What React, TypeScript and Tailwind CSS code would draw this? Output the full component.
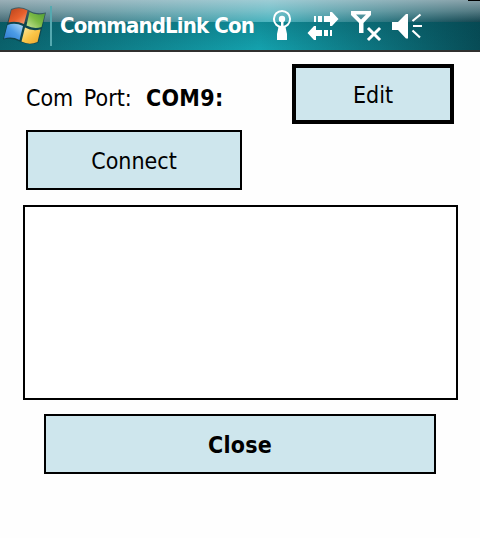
import React from "react";

function WindowsFlag() {
  return (
    <svg className="absolute left-0 top-0" width="50" height="50" viewBox="0 0 50 50">
      <defs>
        <linearGradient id="red" x1="0" y1="0" x2="1" y2="1"><stop offset="0" stopColor="#b8431c" /><stop offset=".55" stopColor="#e8602c" /><stop offset="1" stopColor="#f7a880" /></linearGradient>
        <linearGradient id="green" x1="1" y1="0" x2="0" y2="1"><stop offset="0" stopColor="#4c9a34" /><stop offset=".5" stopColor="#7dbb45" /><stop offset="1" stopColor="#c8e49a" /></linearGradient>
        <linearGradient id="blue" x1="0" y1="1" x2="1" y2="0"><stop offset="0" stopColor="#2f7bd0" /><stop offset=".5" stopColor="#4b9be6" /><stop offset="1" stopColor="#b5dcf6" /></linearGradient>
        <linearGradient id="gold" x1="1" y1="1" x2="0" y2="0"><stop offset="0" stopColor="#eda52c" /><stop offset=".5" stopColor="#fbc648" /><stop offset="1" stopColor="#fdeaa0" /></linearGradient>
      </defs>
      <path d="M11 9Q20 5 28.500 10Q36 15 46 12.500L38.500 42.500Q30 46 20.500 42Q12 37 3 39.500Z" fill="#12343b" fillOpacity=".6" />
      <path d="M11.500 10Q19 6.500 27.500 10.500L24 24Q16 20.500 8.500 22.500Z" fill="url(#red)" />
      <path d="M29.500 12Q36 16 45 13.500L41.500 27Q34 29.500 26.500 25.500Z" fill="url(#green)" />
      <path d="M7.500 25Q15 22 23 26L19.500 40Q12 36 4 38.500Z" fill="url(#blue)" />
      <path d="M25 27.500Q32 31.500 40.500 29.500L37.500 42Q29 45.500 21.500 41.500Z" fill="url(#gold)" />
    </svg>
  );
}

function StatusIcons() {
  return (
    <svg className="absolute left-[260px] top-0" width="180" height="50" viewBox="260 0 180 50" fill="white">
      <circle cx="282" cy="19" r="8.1" fill="none" stroke="white" strokeWidth="2" />
      <circle cx="282" cy="19" r="3.2" />
      <path d="M281 20H283.500V27H285.500L287 34V40H277V34L278.500 27H281Z" />
      <path d="M314 16h2v6h-2zM318 16h4v6h-4zM324 16h6v-4h2l6.500 7-6.500 7h-2v-4h-6z" />
      <path d="M332 30h-2v6h2zM328 30h-4v6h4zM322 30h-6v-4h-2l-6.500 7 6.500 7h2v-4h6z" />
      <path fillRule="evenodd" d="M351 11H371V15L363.500 23V33H359V23L351 15ZM356 14.500L361 19.500L366 14.500Z" />
      <path d="M369 29L379 39M379 29L369 39" stroke="white" strokeWidth="3" strokeLinecap="square" />
      <path d="M392 22H398L406 14H408V38.500H406L398 30H392Z" />
      <path d="M412.500 21L420.500 14.500M413 26H422M412.500 30.500L420 37.500" fill="none" stroke="white" strokeWidth="2.2" />
    </svg>
  );
}

export default function App() {
  return (
    <main className="h-[538px] w-[480px] overflow-hidden bg-[#fefefe] font-['DejaVu_Sans_Condensed','DejaVu_Sans',sans-serif] text-[23px] text-black">
      <header className="relative flex h-[52px] flex-col border-b-2 border-[#30302f]">
        <div className="relative h-[22px] bg-linear-to-r from-[#446a74] via-[#4ab4bf] via-56% to-[#164650]">
          <div className="h-full bg-linear-to-b from-[#d4dde4]/60 via-[#c9dce2]/35 to-transparent" />
          <div className="absolute right-0 top-0 h-px w-3 bg-black" />
        </div>
        <div className="h-7 bg-linear-to-r from-[#0a626c] via-[#14a2ae] via-54% to-[#074c56]">
          <div className="h-full bg-linear-to-b from-[#04404a]/25 to-transparent" />
        </div>
        <WindowsFlag />
        <div className="absolute left-[50px] top-[6px] h-10 w-[2px] bg-[#55a9b0]" />
        <div className="absolute left-[60px] top-[11px] whitespace-nowrap text-[22px] font-bold leading-[30px] tracking-[-0.85px] text-white">CommandLink Con</div>
        <StatusIcons />
      </header>
      <section className="flex h-[78px] items-start pl-[26px] pr-[26px] pt-3">
        <div className="mt-[19px] flex w-[266px] items-center whitespace-nowrap leading-[30px]">
          <span className="w-[120px] [word-spacing:4px]">Com Port:</span>
          <strong className="tracking-[0.3px]">COM9:</strong>
        </div>
        <button className="h-[60px] w-[162px] border-4 border-black bg-[#cee6ed] pt-0.5">Edit</button>
      </section>
      <button className="ml-[26px] block h-[60px] w-[216px] border-2 border-black bg-[#cee6ed] pt-0.5">Connect</button>
      <div className="ml-[23px] mt-[15px] h-[195px] w-[435px] border-2 border-black bg-white" />
      <button className="ml-11 mt-[14px] block h-[60px] w-[392px] border-2 border-black bg-[#cee6ed] pt-0.5 font-bold tracking-[0.2px]">Close</button>
    </main>
  );
}
